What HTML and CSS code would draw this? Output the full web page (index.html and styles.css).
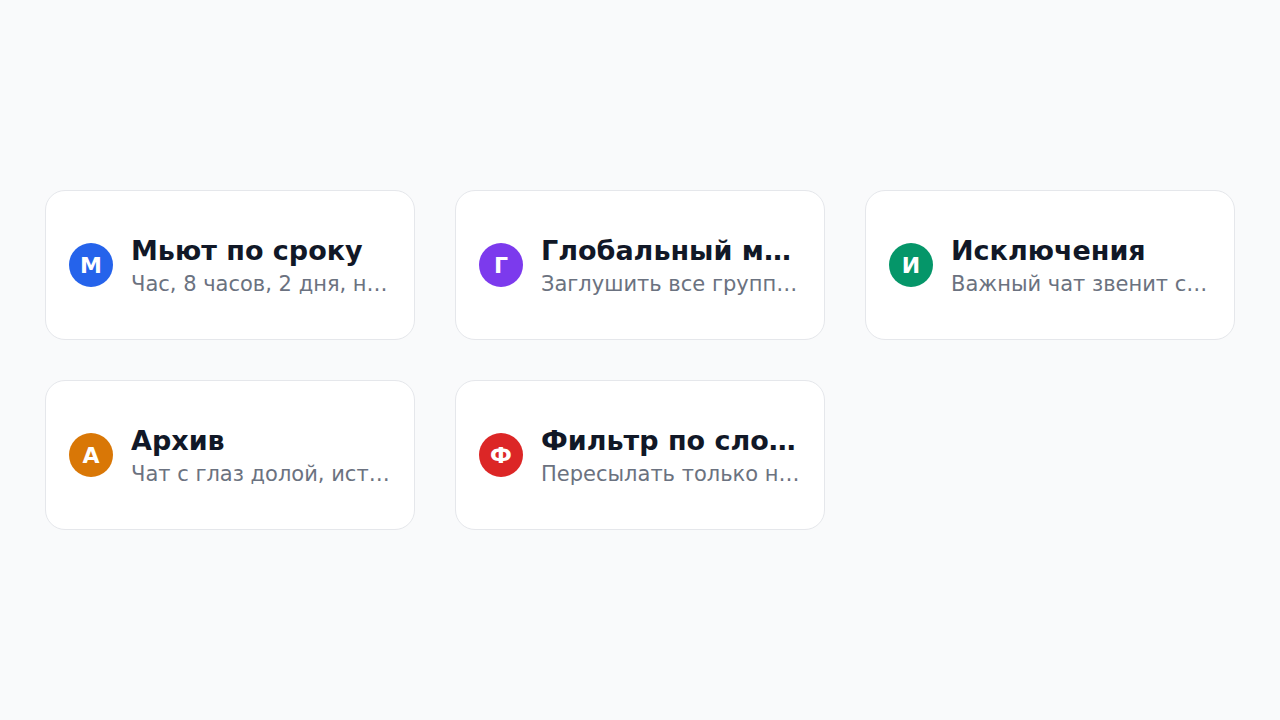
FILE: index.html
```html
<!DOCTYPE html>
<html lang="ru">
<head>
    <meta charset="UTF-8" />
    <title>Настройки уведомлений</title>
    <link rel="stylesheet" href="styles.css">
</head>
<body>
    <!-- Feature cards -->
    <div class="grid">
        <div class="card">
            <div class="avatar blue">М</div>
            <div class="info">
                <div class="title">Мьют по сроку</div>
                <div class="desc">Час, 8 часов, 2 дня, навсегда</div>
            </div>
        </div>
        <div class="card">
            <div class="avatar purple">Г</div>
            <div class="info">
                <div class="title">Глобальный мьют</div>
                <div class="desc">Заглушить все группы разом</div>
            </div>
        </div>
        <div class="card">
            <div class="avatar green">И</div>
            <div class="info">
                <div class="title">Исключения</div>
                <div class="desc">Важный чат звенит с мьютом</div>
            </div>
        </div>
        <div class="card">
            <div class="avatar orange">А</div>
            <div class="info">
                <div class="title">Архив</div>
                <div class="desc">Чат с глаз долой, история цела</div>
            </div>
        </div>
        <div class="card">
            <div class="avatar red">Ф</div>
            <div class="info">
                <div class="title">Фильтр по словам</div>
                <div class="desc">Пересылать только нужное</div>
            </div>
        </div>
    </div>
</body>
</html>
```

FILE: styles.css
```css
/* Page */
html, body { height: 100%; }
body {
    margin: 0;
    background-color: #f9fafb;
    font-family: "DejaVu Sans", sans-serif;
    display: flex;
    align-items: center;
    padding: 0 45px;
    box-sizing: border-box;
}

/* Grid of cards */
.grid {
    display: grid;
    grid-template-columns: repeat(3, 1fr);
    gap: 40px;
    width: 100%;
}

.card {
    height: 150px;
    box-sizing: border-box;
    background-color: #ffffff;
    border: 1px solid #e5e7eb;
    border-radius: 20px;
    padding: 0 24px 0 23px;
    display: flex;
    align-items: center;
    gap: 18px;
    min-width: 0;
}

/* Letter circles */
.avatar {
    flex: 0 0 44px;
    height: 44px;
    border-radius: 50%;
    color: #ffffff;
    font-weight: bold;
    font-size: 22px;
    display: flex;
    align-items: center;
    justify-content: center;
}
.blue { background-color: #2563eb; }
.purple { background-color: #7c3aed; }
.green { background-color: #059669; }
.orange { background-color: #d97706; }
.red { background-color: #dc2626; }

/* Text */
.info {
    min-width: 0;
    display: flex;
    flex-direction: column;
    gap: 6px;
}
.title, .desc {
    white-space: nowrap;
    overflow: hidden;
    text-overflow: ellipsis;
}
.title {
    font-size: 27px;
    font-weight: bold;
    color: #111827;
}
.desc {
    font-size: 21px;
    color: #6b7280;
}
```
